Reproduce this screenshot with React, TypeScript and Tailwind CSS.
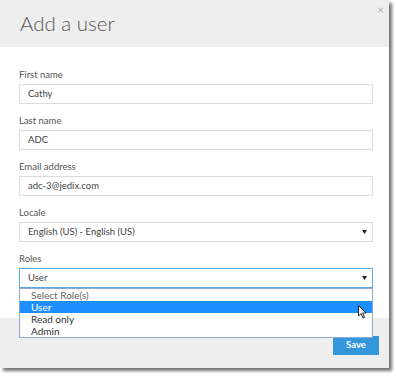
import React from "react";

const font = { fontFamily: "Lato, 'Open Sans', Arial, sans-serif" };

function Field({ label, value, select, focused }: { label: string; value: string; select?: boolean; focused?: boolean }) {
  return (
    <div className="flex flex-col">
      <div className="h-[12px] leading-[12px] text-[9.5px] text-[#555]">{label}</div>
      <div
        className={
          "mt-[3px] h-[20px] flex items-center justify-between pl-[8px] pr-[5px] text-[9.5px] text-[#444] border " +
          (focused ? "border-[#5aa9e6]" : "border-[#dcdcdc]")
        }
      >
        <span>{value}</span>
        {select && (
          <svg width="5" height="4" viewBox="0 0 5 4">
            <path d="M0 0 H5 L2.5 4 Z" fill="#222" />
          </svg>
        )}
      </div>
    </div>
  );
}

export default function App() {
  return (
    <div className="w-[396px] h-[376px] bg-white relative overflow-hidden" style={font}>
      <div className="w-[389px] flex flex-col bg-white shadow-[3px_3px_3px_rgba(0,0,0,0.55)] relative">
        <div className="h-[47px] bg-[#eeeeee] flex items-center pl-[20px] relative">
          <span className="text-[20.5px] font-light text-[#555] leading-none">Add a user</span>
          <span className="absolute right-[5px] top-[4px] text-[12px] text-[#b5b5b5] leading-none">×</span>
        </div>
        <div className="flex flex-col gap-[11px] pt-[22px] pb-[30px] pl-[19px] pr-[16px]">
          <Field label="First name" value="Cathy" />
          <Field label="Last name" value="ADC" />
          <Field label="Email address" value="adc-3@jedix.com" />
          <Field label="Locale" value="English (US) - English (US)" select />
          <Field label="Roles" value="User" select focused />
        </div>
        <div className="h-[50px] bg-[#eeeeee] flex justify-end items-start pt-[18px] pr-[10px]">
          <div className="w-[46px] h-[19px] bg-[#3497dc] text-white text-[9.5px] font-bold flex items-center justify-center">
            Save
          </div>
        </div>
      </div>
      <div className="absolute left-[19px] top-[288px] w-[354px] bg-white border border-[#8ea9d6] text-[10px] leading-[12px]">
        <div className="h-[12px] pl-[11px] text-[#666]">Select Role(s)</div>
        <div className="h-[12px] pl-[11px] bg-[#1e8fff] text-white">User</div>
        <div className="h-[12px] pl-[11px] text-[#333]">Read only</div>
        <div className="h-[12px] pl-[11px] text-[#333]">Admin</div>
      </div>
      <svg className="absolute left-[358px] top-[305px]" width="10" height="14" viewBox="0 0 10 14">
        <path d="M0.5 0.5 V11 L3 8.5 L5 13 L6.5 12.3 L4.6 8 H8 Z" fill="white" stroke="#222" strokeWidth="1" strokeLinejoin="round" />
      </svg>
    </div>
  );
}
